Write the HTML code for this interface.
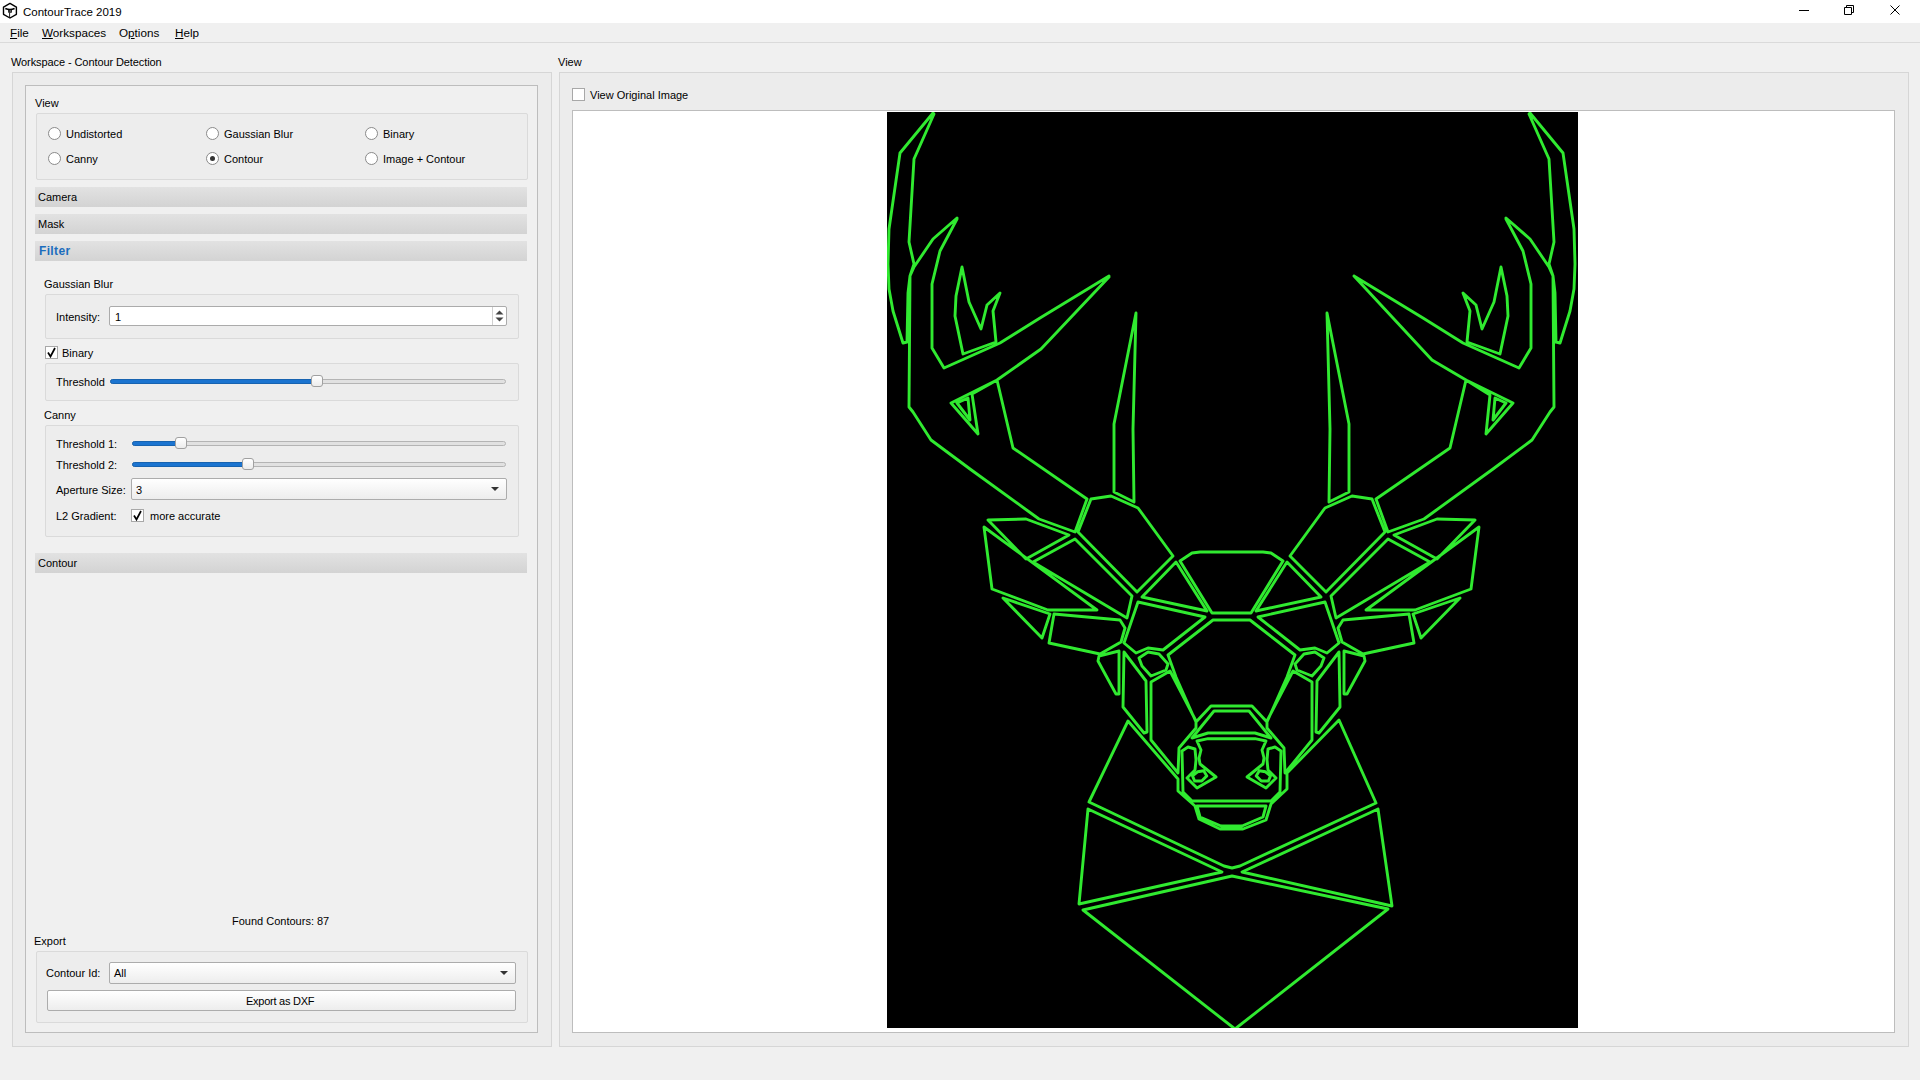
<!DOCTYPE html>
<html><head><meta charset="utf-8"><style>
*{margin:0;padding:0;box-sizing:border-box}
html,body{width:1920px;height:1080px;overflow:hidden;background:#f0f0f0;font-family:"Liberation Sans",sans-serif;font-size:11px;color:#000}
.t{position:absolute;white-space:nowrap;line-height:13px}
.box{position:absolute;border:1px solid #d0d0d0}
.gb{position:absolute;border:1px solid #dadada;border-radius:2px;background:#ededed}
.radio{position:absolute;width:13px;height:13px;border-radius:50%;border:1px solid #8a8a8a;background:#fff}
.radio .dot{position:absolute;left:3px;top:3px;width:5px;height:5px;border-radius:50%;background:#333}
.bar{position:absolute;left:35px;width:492px;height:20px;background:linear-gradient(#e2e2e2,#d3d3d3)}
.spin{position:absolute;background:#fff;border:1px solid #ababab;border-radius:2px}
.chk{position:absolute;width:13px;height:13px;background:#fff;border:1px solid #a8a8a8}
.groove{position:absolute;height:5px;border:1px solid #b4b4b4;border-radius:3px;background:#e1e1e1}
.fill{position:absolute;height:5px;border-radius:3px;background:#1b74d0;border:1px solid #1763b0}
.handle{position:absolute;width:12px;height:12px;border:1px solid #a0a0a0;border-radius:3px;background:linear-gradient(#fff,#ececec)}
.combo{position:absolute;border:1px solid #acacac;border-radius:2px;background:linear-gradient(#fff,#ededed)}
</style></head><body>
<div style="position:absolute;left:0;top:0;width:1920px;height:23px;background:#fff"></div>
<div class="t" style="left:23px;top:6px;font-size:11.5px;color:#000">ContourTrace 2019</div>

<div style="position:absolute;left:0;top:23px;width:1920px;height:19px;background:#f0f0f0"></div>
<div style="position:absolute;left:0;top:42px;width:1920px;height:1px;background:#dadada"></div>
<div class="t" style="left:10px;top:26px;font-size:11.7px"><u>F</u>ile</div>

<div class="t" style="left:42px;top:26px;font-size:11.7px"><u>W</u>orkspaces</div>

<div class="t" style="left:119px;top:26px;font-size:11.7px">O<u>p</u>tions</div>

<div class="t" style="left:175px;top:26px;font-size:11.7px"><u>H</u>elp</div>

<div class="t" style="left:11px;top:56px;letter-spacing:-0.09px">Workspace - Contour Detection</div>

<div class="box" style="left:12px;top:72px;width:540px;height:975px;border-color:#d6d6d6;background:#ececec"></div>
<div class="box" style="left:25px;top:85px;width:513px;height:948px;border-color:#bdbdbd;background:#f0f0f0"></div>
<div class="t" style="left:35px;top:97px;">View</div>

<div class="gb" style="left:36px;top:113px;width:492px;height:67px"></div>
<div class="radio" style="left:47.5px;top:126.5px"></div>
<div class="t" style="left:66px;top:128px;">Undistorted</div>

<div class="radio" style="left:205.5px;top:126.5px"></div>
<div class="t" style="left:224px;top:128px;">Gaussian Blur</div>

<div class="radio" style="left:364.5px;top:126.5px"></div>
<div class="t" style="left:383px;top:128px;">Binary</div>

<div class="radio" style="left:47.5px;top:151.5px"></div>
<div class="t" style="left:66px;top:153px;">Canny</div>

<div class="radio" style="left:205.5px;top:151.5px"><div class="dot"></div></div>
<div class="t" style="left:224px;top:153px;">Contour</div>

<div class="radio" style="left:364.5px;top:151.5px"></div>
<div class="t" style="left:383px;top:153px;">Image + Contour</div>

<div class="bar" style="top:187px"></div>
<div class="t" style="left:38px;top:191px;">Camera</div>

<div class="bar" style="top:214px"></div>
<div class="t" style="left:38px;top:218px;">Mask</div>

<div class="bar" style="top:241px"></div>
<div class="t" style="left:39px;top:245px;font-weight:bold;color:#1c6dbd;font-size:12px;letter-spacing:0.35px">Filter</div>

<div class="bar" style="top:553px"></div>
<div class="t" style="left:38px;top:557px;">Contour</div>

<div class="t" style="left:44px;top:278px;">Gaussian Blur</div>

<div class="gb" style="left:45px;top:294px;width:474px;height:45px"></div>
<div class="t" style="left:56px;top:311px;">Intensity:</div>

<div class="spin" style="left:109px;top:306px;width:398px;height:20px"></div>
<div style="position:absolute;left:492px;top:307px;width:1px;height:18px;background:#d0d0d0"></div>
<svg style="position:absolute;left:494px;top:308px" width="11" height="16"><path d="M1.5 6.5 L5.5 2.5 L9.5 6.5 Z M1.5 9.5 L9.5 9.5 L5.5 13.5 Z" fill="#444"/></svg>
<div class="t" style="left:115px;top:311px;">1</div>

<div class="chk" style="left:45px;top:346px"></div>
<svg style="position:absolute;left:45px;top:346px" width="13" height="13"><path d="M3 6.5 L5.5 10.5 L10 2" stroke="#000" stroke-width="1.7" fill="none"/></svg>
<div class="t" style="left:62px;top:347px;">Binary</div>

<div class="gb" style="left:45px;top:363px;width:474px;height:38px"></div>
<div class="t" style="left:56px;top:376px;">Threshold</div>

<div class="groove" style="left:110px;top:378.5px;width:396px"></div><div class="fill" style="left:110px;top:378.5px;width:207px"></div><div class="handle" style="left:311px;top:375px"></div>
<div class="t" style="left:44px;top:409px;">Canny</div>

<div class="gb" style="left:45px;top:425px;width:474px;height:112px"></div>
<div class="t" style="left:56px;top:438px;">Threshold 1:</div>

<div class="groove" style="left:132px;top:440.5px;width:374px"></div><div class="fill" style="left:132px;top:440.5px;width:49px"></div><div class="handle" style="left:175px;top:437px"></div>
<div class="t" style="left:56px;top:459px;">Threshold 2:</div>

<div class="groove" style="left:132px;top:461.5px;width:374px"></div><div class="fill" style="left:132px;top:461.5px;width:116px"></div><div class="handle" style="left:242px;top:458px"></div>
<div class="t" style="left:56px;top:484px;">Aperture Size:</div>

<div class="combo" style="left:131px;top:478px;width:376px;height:22px"></div>
<svg style="position:absolute;left:490px;top:486px" width="11" height="6"><path d="M1 1 L9 1 L5 5 Z" fill="#333"/></svg>
<div class="t" style="left:136px;top:484px;">3</div>

<div class="t" style="left:56px;top:510px;">L2 Gradient:</div>

<div class="chk" style="left:131px;top:509px"></div>
<svg style="position:absolute;left:131px;top:509px" width="13" height="13"><path d="M3 6.5 L5.5 10.5 L10 2" stroke="#000" stroke-width="1.7" fill="none"/></svg>
<div class="t" style="left:150px;top:510px;">more accurate</div>

<div class="t" style="left:232px;top:915px;">Found Contours: 87</div>

<div class="t" style="left:34px;top:935px;">Export</div>

<div class="gb" style="left:36px;top:951px;width:492px;height:72px"></div>
<div class="t" style="left:46px;top:967px;">Contour Id:</div>

<div class="combo" style="left:109px;top:962px;width:407px;height:22px"></div>
<svg style="position:absolute;left:499px;top:970px" width="11" height="6"><path d="M1 1 L9 1 L5 5 Z" fill="#333"/></svg>
<div class="t" style="left:114px;top:967px;">All</div>

<div class="combo" style="left:47px;top:990px;width:469px;height:21px"></div>
<div class="t" style="left:246px;top:995px;letter-spacing:-0.25px">Export as DXF</div>

<div class="t" style="left:558px;top:56px;">View</div>

<div class="box" style="left:559px;top:72px;width:1350px;height:975px;border-color:#d6d6d6;background:#ececec"></div>
<div class="chk" style="left:572px;top:88px"></div>
<div class="t" style="left:590px;top:89px;">View Original Image</div>

<div style="position:absolute;left:572px;top:110px;width:1323px;height:923px;background:#fff;border:1px solid #bdbdbd"></div>
<div style="position:absolute;left:887px;top:112px;width:691px;height:916px;background:#000"></div>
<svg style="position:absolute;left:1790px;top:0" width="130" height="22"><path d="M9 10.5 H19" stroke="#000" stroke-width="1"/><path d="M54.5 7.5 H61.5 V14.5 H54.5 Z M56.5 7.5 V5.5 H63.5 V12.5 H61.5" stroke="#000" stroke-width="1" fill="none"/><path d="M100.5 5.5 L109.5 14.5 M109.5 5.5 L100.5 14.5" stroke="#000" stroke-width="1"/></svg>
<svg style="position:absolute;left:0;top:0" width="22" height="22"><path d="M10 3.4 L16.4 7.1 V14.3 L10 18 L3.5 14.3 V7.1 Z" stroke="#000" stroke-width="1.4" fill="none" stroke-linejoin="round"/><path d="M5.3 8.6 Q10 10.6 14.6 8.6" stroke="#000" stroke-width="1.6" fill="none"/><rect x="8.2" y="9.6" width="3.6" height="3.1" fill="#000"/><rect x="9.6" y="10.5" width="1.1" height="1" fill="#fff"/><path d="M9.6 12.5 V17.6" stroke="#222" stroke-width="1"/></svg><svg style="position:absolute;left:887px;top:112px" width="691" height="916" viewBox="0 0 691 916"><path d="M46,1 L13,41 L2,117 L1,152 L2,177 L6,199 L16,231 L20,230 L21,181 L23,164 L27,152 L22,130 L27,47 L47,2Z M643,1 L676,41 L687,117 L688,152 L687,177 L683,199 L673,231 L669,230 L668,181 L666,164 L662,152 L667,130 L662,47 L642,2Z M70,106 L46,127 L27,155 L23,164 L22,295 L26,300 L44,328 L83,357 L152,407 L188,420 L200,387 M619,106 L643,127 L662,155 L666,164 L667,295 L663,300 L645,328 L606,357 L537,407 L501,420 L489,387 M70,107 L53,139 L45,172 L45,236 L57,256 L113,231 L153,206 L222,164 M619,107 L636,139 L644,172 L644,236 L632,256 L576,231 L536,206 L467,164 M70,291 L81,286 L83,308Z M619,291 L608,286 L606,308Z M110,268 L126,336 L200,387 M579,268 L563,336 L489,387 M75,155 L69,184 L68,204 L76,242 L109,230 L106,199 L113,181 L100,193 L94,217 L82,190Z M614,155 L620,184 L621,204 L613,242 L580,230 L583,199 L576,181 L589,193 L595,217 L607,190Z M249,201 L227,312 L227,380 L247,390 L246,317Z M440,201 L462,312 L462,380 L442,390 L443,317Z M101,408 L139,407 L182,423 L139,447Z M588,408 L550,407 L507,423 L550,447Z M97,415 L105,477 L161,498 L210,498Z M592,415 L584,477 L528,498 L479,498Z M146,450 L188,427 L245,484 L240,506Z M543,450 L501,427 L444,484 L449,506Z M116,486 L163,502 L155,526Z M573,486 L526,502 L534,526Z M167,502 L233,508 L238,516 L234,530 L213,542 L162,531Z M522,502 L456,508 L451,516 L455,530 L476,542 L527,531Z M204,387 L224,384 L251,396 L286,444 L250,480 L191,420Z M485,387 L465,384 L438,396 L403,444 L439,480 L498,420Z M255,485 L289,450 L320,499Z M434,485 L400,450 L369,499Z M251,490 L318,505 L276,538 L261,536 L249,541 L237,531Z M438,490 L371,505 L413,538 L428,536 L440,541 L452,531Z M252,546 L261,540 L272,542 L281,552 L279,558 L264,564 L255,554Z M437,546 L428,540 L417,542 L408,552 L410,558 L425,564 L434,554Z M264,570 L283,559 L309,609 L309,616 L292,636 L291,661 L264,628Z M425,570 L406,559 L380,609 L380,616 L397,636 L398,661 L425,628Z M305.5,663.9 L310.5999999999999,659.8 L316.70000000000005,658.8 L319.79999999999995,663.9 L314.70000000000005,669 L307.5999999999999,669Z M383.5,663.9 L378.4000000000001,659.8 L372.29999999999995,658.8 L369.20000000000005,663.9 L374.29999999999995,669 L381.4000000000001,669Z M212,544 L232,539 L232,582 L229,582 L211,549Z M477,544 L457,539 L457,582 L460,582 L478,549Z M237,540 L259,569 L260,620 L257,621 L236,595Z M452,540 L430,569 L429,620 L432,621 L453,595Z M222,165 L154,237 L110,268 L64,291 L91,322 L85,282 L110,268 M467,164 L545,248 L579,268 L626,291 L599,322 L603,283 L579,268 M345,440 L313,440 L305,441 L293,449 L325,501 L345,501 L344,501 L364,501 L396,449 L384,441 L376,440 L344,440Z M345,508 L326,508 L281,543 L289,565 L309,610 L324,594 L345,594 L344,594 L365,594 L380,610 L400,565 L408,543 L363,508 L344,508Z M345,599 L327,599 L305,626 L321,621 L345,621 L344,621 L368,621 L384,626 L362,599 L344,599Z M345,626.7 L321,626.7 L310,629 L314,638 L312,646 L313,652 L329,665 L310,676 L300,666 L308,658 L309,648 L308,637 L301,635 L295,639 L296,680 L305,689 L345,689 L344,689 L384,689 L393,680 L394,639 L388,635 L381,637 L380,648 L381,658 L389,666 L379,676 L360,665 L376,652 L377,646 L375,638 L379,629 L368,626.7 L344,626.7Z M345,694 L310,694 L313,705 L334,714 L345,714 L344,714 L355,714 L376,705 L379,694 L344,694Z M241,609 L291,667 L291,679 L308,694 L312,707 L333,717 L356,717 L379,708 L384,692 L400,677 L400,661 L452,608 L489,691 L353,754 L345,756 L337,754 L202,690Z M201,697 L335,760 L192,792Z M491,697 L355,760 L505,794Z M196,798 L345,764 L501,797 L348,917Z" fill="none" stroke="#30ea30" stroke-width="2.9" stroke-linejoin="round" stroke-linecap="round"/></svg>
</body></html>
